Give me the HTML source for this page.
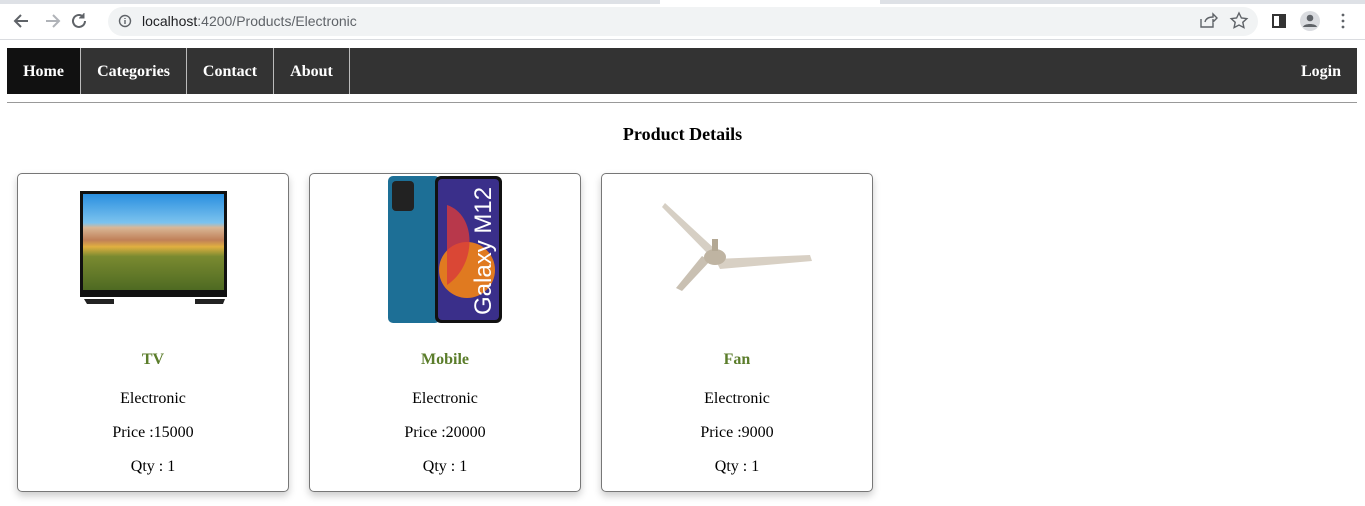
<!DOCTYPE html>
<html><head><style>
*{margin:0;padding:0;box-sizing:border-box}
body{width:1365px;height:506px;background:#fff;font-family:"Liberation Serif",serif;position:relative;overflow:hidden}
.abs{position:absolute}
.tabstrip{left:0;top:0;width:1365px;height:4px;background:#dee1e6}
.tabw{left:660px;top:0;width:220px;height:4px;background:#fff}
.toolbar{left:0;top:4px;width:1365px;height:36px;background:#fff;border-bottom:1px solid #dadce0}
.omni{left:108px;top:7px;width:1150px;height:29px;border-radius:15px;background:#f1f3f4}
.url{left:142px;top:13px;font-family:"Liberation Sans",sans-serif;font-size:14px;color:#202124}
.url span{color:#5f6368}
.nav{left:7px;top:48px;width:1350px;height:46px;background:#333}
.nav a{position:absolute;top:0;height:46px;line-height:47px;color:#fff;font-weight:bold;font-size:16px;text-align:center;border-right:1px solid #bbb}
.hr{left:7px;top:102px;width:1350px;height:1px;background:#999}
h2{position:absolute;left:0;width:1365px;top:124px;text-align:center;font-size:18px;font-weight:bold}
.card{position:absolute;top:173px;width:272px;height:319px;border:1px solid #777;border-radius:5px;box-shadow:0 4px 8px rgba(0,0,0,.2);text-align:center;font-size:16px}
.card .t{position:absolute;left:0;width:100%;top:177px;color:#5b7d2b;font-weight:bold;font-size:16px}
.card .l{position:absolute;left:0;width:100%}
</style></head><body>
<div class="abs tabstrip"></div><div class="abs tabw"></div>
<div class="abs toolbar"></div>
<svg class="abs" style="left:12px;top:11px" width="80" height="20" viewBox="0 0 80 20"><path d="M16 10H4M9 4L3 10l6 6" stroke="#5f6368" stroke-width="2" fill="none"/><path d="M34 10h12M41 4l6 6-6 6" stroke="#b0b3b8" stroke-width="2" fill="none"/><path d="M79 10a6 6 0 1 1-2-4.5" stroke="#5f6368" stroke-width="2" fill="none" transform="translate(-6,0)"/><path d="M72 2v5h-5" fill="#5f6368" stroke="#5f6368" stroke-width="1"/></svg>
<div class="abs omni"></div>
<svg class="abs" style="left:118px;top:14px" width="14" height="14"><circle cx="7" cy="7" r="5.5" stroke="#5f6368" stroke-width="1.4" fill="none"/><path d="M7 6v4M7 4v1" stroke="#5f6368" stroke-width="1.4"/></svg>
<div class="abs url">localhost<span>:4200/Products/Electronic</span></div>
<svg class="abs" style="left:1198px;top:11px" width="160" height="20"><path d="M3 8v8h12v-4M7 11c1-4 4-5 8-5V3l4 4-4 4V8" stroke="#5f6368" stroke-width="1.4" fill="none"/><path d="M41 2l2.4 5 5.4.6-4 3.7 1.1 5.3L41 14l-4.9 2.6 1.1-5.3-4-3.7 5.4-.6z" stroke="#5f6368" stroke-width="1.4" fill="none"/><rect x="75" y="4" width="12" height="12" stroke="#333" stroke-width="2" fill="none"/><rect x="81" y="4" width="6" height="12" fill="#333"/><circle cx="112" cy="10" r="10" fill="#dadce0"/><circle cx="112" cy="7" r="3.3" fill="#5f6368"/><path d="M105 16c1-4 13-4 14 0z" fill="#5f6368"/><circle cx="145" cy="4" r="1.4" fill="#5f6368"/><circle cx="145" cy="10" r="1.4" fill="#5f6368"/><circle cx="145" cy="16" r="1.4" fill="#5f6368"/></svg>
<div class="abs nav">
<a style="left:0;width:74px;background:#111">Home</a>
<a style="left:74px;width:106px">Categories</a>
<a style="left:180px;width:87px">Contact</a>
<a style="left:267px;width:76px">About</a>
<a style="right:16px;border:none">Login</a>
</div>
<div class="abs hr"></div>
<h2>Product Details</h2>

<div class="card" style="left:17px">
<svg class="abs" style="left:61px;top:17px" width="150" height="118"><rect x="1" y="0" width="147" height="106" fill="#111"/><defs><linearGradient id="g" x1="0" y1="0" x2="0" y2="1"><stop offset="0" stop-color="#2a8fe0"/><stop offset=".3" stop-color="#7cc3ee"/><stop offset=".35" stop-color="#d9b796"/><stop offset=".48" stop-color="#c08058"/><stop offset=".55" stop-color="#e0b040"/><stop offset=".65" stop-color="#7a8a30"/><stop offset="1" stop-color="#4e6a22"/></linearGradient></defs><rect x="4" y="3" width="141" height="96" fill="url(#g)"/><path d="M5 108h30v5H8zM116 108h30l-2 5h-28z" fill="#222"/></svg>
<div class="t">TV</div>
<div class="l" style="top:216px">Electronic</div>
<div class="l" style="top:250px">Price :15000</div>
<div class="l" style="top:284px">Qty : 1</div>
</div>

<div class="card" style="left:309px">
<svg class="abs" style="left:77px;top:1px" width="117" height="150"><rect x="1" y="1" width="52" height="147" rx="5" fill="#1d6f96"/><rect x="5" y="6" width="22" height="30" rx="4" fill="#222"/><rect x="48" y="1" width="67" height="147" rx="6" fill="#111"/><rect x="51" y="4" width="61" height="141" rx="4" fill="#3a2f8a"/><circle cx="80" cy="95" r="28" fill="#e07a20"/><path d="M60 30c30 10 30 60 0 80z" fill="#d83b3b" opacity=".8"/><text x="0" y="0" transform="translate(104,140) rotate(-90)" fill="#fff" font-family="Liberation Sans" font-size="24">Galaxy M12</text></svg>
<div class="t">Mobile</div>
<div class="l" style="top:216px">Electronic</div>
<div class="l" style="top:250px">Price :20000</div>
<div class="l" style="top:284px">Qty : 1</div>
</div>

<div class="card" style="left:601px">
<svg class="abs" style="left:58px;top:25px" width="155" height="100"><path d="M2 8l3-4 52 48-6 6z" fill="#d6cfc4"/><path d="M55 60l95 -4 2 6-92 8z" fill="#d8d0c4"/><path d="M50 62l-28 30-6-3 26-32z" fill="#c9c0b2"/><ellipse cx="55" cy="58" rx="11" ry="8" fill="#bfb4a2"/><rect x="52" y="40" width="6" height="12" fill="#b3a894"/></svg>
<div class="t">Fan</div>
<div class="l" style="top:216px">Electronic</div>
<div class="l" style="top:250px">Price :9000</div>
<div class="l" style="top:284px">Qty : 1</div>
</div>
</body></html>
